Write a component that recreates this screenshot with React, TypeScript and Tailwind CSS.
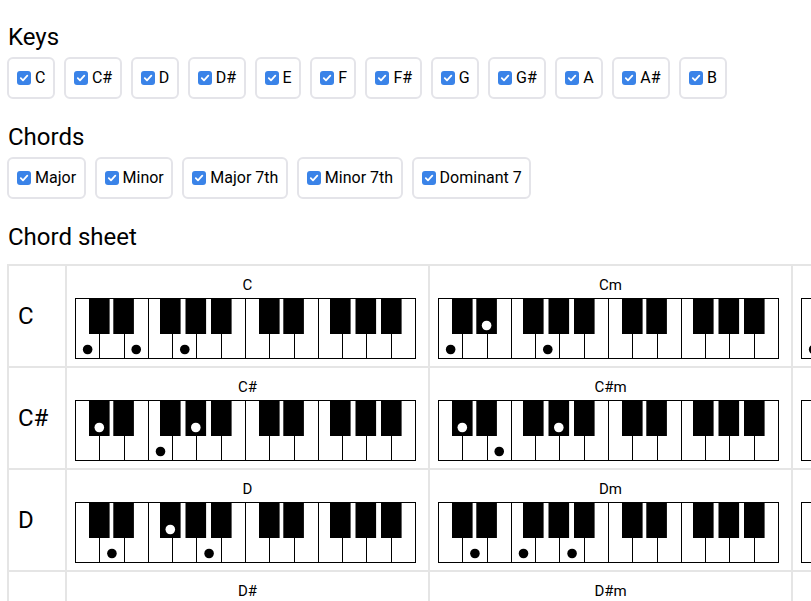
import React from 'react';

// Note names and chord types shown in the filter chips and the sheet.
const NOTES = ['C', 'C#', 'D', 'D#', 'E', 'F', 'F#', 'G', 'G#', 'A', 'A#', 'B'];

const CHORDS = [
  { name: 'Major', suffix: '', intervals: [0, 4, 7] },
  { name: 'Minor', suffix: 'm', intervals: [0, 3, 7] },
  { name: 'Major 7th', suffix: 'maj7', intervals: [0, 4, 7, 11] },
  { name: 'Minor 7th', suffix: 'm7', intervals: [0, 3, 7, 10] },
  { name: 'Dominant 7', suffix: '7', intervals: [0, 4, 7, 10] }
];

// Keyboard geometry (two octaves, 14 white keys).
const KB_W = 340;
const KB_H = 60;
const WHITE_W = KB_W / 14;
const OCTAVE_W = WHITE_W * 7;
const BLACK_W = 20.6;
const BLACK_H = 36;
const WHITE_OF: Record<number, number> = { 0: 0, 2: 1, 4: 2, 5: 3, 7: 4, 9: 5, 11: 6 };
const BLACK_OFFSET: Record<number, number> = { 1: 14, 3: 38.3, 6: 85, 8: 110.5, 10: 136 };

const Checkbox = () => (
  <span className="flex h-[14px] w-[14px] shrink-0 items-center justify-center rounded-[3px] bg-[#3a83e8]">
    <svg width="10" height="10" viewBox="0 0 10 10">
      <path d="M1.8 5.2 L4 7.3 L8.3 2.6" fill="none" stroke="white" strokeWidth="1.8" strokeLinecap="round" strokeLinejoin="round" />
    </svg>
  </span>
);

const Chip = ({ label }: { label: string }) => (
  <label className="flex h-[42px] items-center gap-[4px] rounded-[6px] border-2 border-[#e4e4e9] pl-[8px] pr-[7.5px] text-[16px]">
    <Checkbox />
    <span>{label}</span>
  </label>
);

const Keyboard = ({ notes }: { notes: number[] }) => {
  const lines = [];
  for (let i = 1; i < 14; i++) {
    const x = Math.round(i * WHITE_W) + 0.5;
    lines.push(<line key={i} x1={x} y1={0} x2={x} y2={KB_H} stroke="black" strokeWidth="1" />);
  }
  const blacks = [];
  for (let oct = 0; oct < 2; oct++) {
    for (const semi of [1, 3, 6, 8, 10]) {
      blacks.push(
        <rect
          key={`${oct}-${semi}`}
          x={oct * OCTAVE_W + BLACK_OFFSET[semi]}
          y={0}
          width={BLACK_W}
          height={BLACK_H}
          fill="black"
        />
      );
    }
  }
  const dots = notes.map((n) => {
    const oct = Math.floor(n / 12);
    const semi = n % 12;
    if (semi in WHITE_OF) {
      const cx = (oct * 7 + WHITE_OF[semi] + 0.5) * WHITE_W + 0.5;
      return <circle key={n} cx={cx} cy={51.5} r={4.8} fill="black" />;
    }
    const cx = oct * OCTAVE_W + BLACK_OFFSET[semi] + BLACK_W / 2;
    return <circle key={n} cx={cx} cy={27.5} r={4.8} fill="white" />;
  });

  return (
    <svg width={KB_W + 1} height={KB_H + 1} className="block">
      <rect x={0.5} y={0.5} width={KB_W} height={KB_H} fill="white" stroke="black" strokeWidth="1" />
      {lines}
      {blacks}
      {dots}
    </svg>
  );
};

const App = () => {
  return (
    <div
      className="h-[601px] w-[811px] overflow-hidden bg-white px-[7px] pt-[21px] text-black"
      style={{ fontFamily: '"Segoe UI", Roboto, "DejaVu Sans", sans-serif' }}
    >
      <h2 className="pl-[1px] text-[24px] leading-[32px]">Keys</h2>
      <div className="mt-[4px] flex gap-[9px]">
        {NOTES.map((n) => <Chip key={n} label={n} />)}
      </div>

      <h2 className="mt-[22px] pl-[1px] text-[24px] leading-[32px]">Chords</h2>
      <div className="mt-[4px] flex gap-[9px]">
        {CHORDS.map((c) => <Chip key={c.name} label={c.name} />)}
      </div>

      <h2 className="mt-[22px] pl-[1px] text-[24px] leading-[32px]">Chord sheet</h2>
      <div className="mt-[11px] flex w-max flex-col border-l-2 border-t-2 border-[#e5e5e5]">
        {NOTES.map((note, root) => (
          <div key={note} className="flex h-[102px]">
            <div className="flex w-[58px] shrink-0 items-center border-b-2 border-r-2 border-[#e5e5e5] pl-[9px] text-[24px]">
              {note}
            </div>
            {CHORDS.map((chord) => (
              <div
                key={chord.name}
                className="w-[363px] shrink-0 border-b-2 border-r-2 border-[#e5e5e5] px-[8px] pt-[9px]"
              >
                <div className="text-center text-[15px] leading-[20px]">{note}{chord.suffix}</div>
                <div className="mt-[3px]">
                  <Keyboard notes={chord.intervals.map((i) => root + i)} />
                </div>
              </div>
            ))}
          </div>
        ))}
      </div>
    </div>
  );
};

export default App;
